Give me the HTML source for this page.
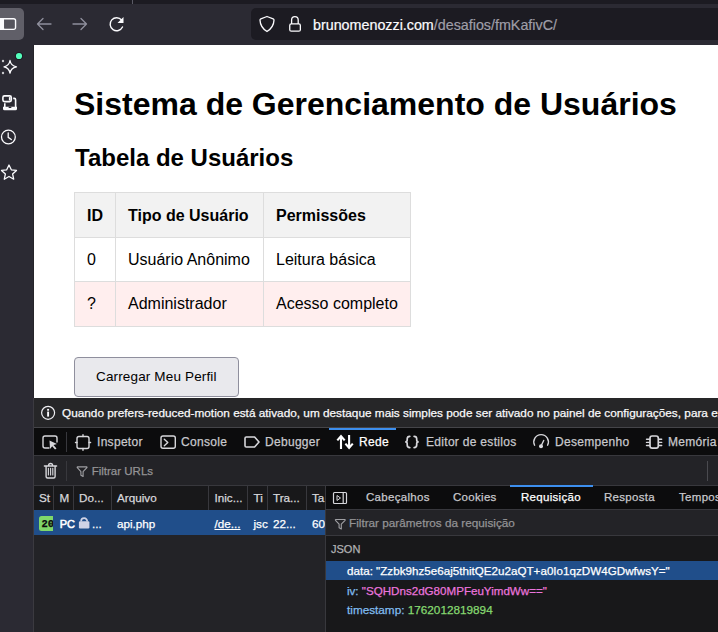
<!DOCTYPE html>
<html><head><meta charset="utf-8">
<style>
*{margin:0;padding:0;box-sizing:border-box}
html,body{width:718px;height:632px;overflow:hidden;background:#2b2a33;font-family:"Liberation Sans",sans-serif}
.a{position:absolute}
.t{position:absolute;white-space:nowrap;line-height:1}
svg{position:absolute;overflow:visible}
.dv .t{-webkit-text-stroke:0.25px currentColor}
</style></head><body>
<!-- top strip -->
<div class="a" style="left:0;top:0;width:718px;height:4px;background:#1c1b22"></div>
<div class="a" style="left:132px;top:0;width:1px;height:4px;background:#5b5b66"></div>
<!-- sidebar button -->
<div class="a" style="left:-8px;top:8px;width:32px;height:32px;border-radius:5px;background:#605f68"></div>
<svg style="left:0;top:0" width="34" height="200">
  <rect x="-4" y="18.75" width="19.5" height="10.5" rx="2" fill="#605f68" stroke="#fbfbfe" stroke-width="1.5"/>
  <rect x="-4" y="18" width="8" height="12" fill="#fbfbfe"/>
  <rect x="4.5" y="20" width="10" height="8.5" fill="#55545d"/>
  <!-- green dot -->
  <circle cx="19" cy="56" r="4" fill="#1c1b22"/>
  <circle cx="19" cy="56" r="3.1" fill="#54ffbd"/>
  <!-- sparkle -->
  <path d="M10 60.5 Q10.8 65.8 16.5 66.8 Q10.8 67.8 10 73.2 Q9.2 67.8 4 66.8 Q9.2 65.8 10 60.5 Z" fill="none" stroke="#fbfbfe" stroke-width="1.3" stroke-linejoin="round"/>
  <circle cx="3" cy="61" r="1.2" fill="#c8c8cc"/>
  <circle cx="3" cy="73" r="1.2" fill="#c8c8cc"/>
  <!-- synced tabs -->
  <rect x="2.9" y="95.9" width="8.4" height="5.7" rx="1.6" fill="none" stroke="#fbfbfe" stroke-width="1.6"/>
  <rect x="8.9" y="97.1" width="1.6" height="3.4" fill="#fbfbfe"/>
  <path d="M13.2 98.4 H14.3 Q15.6 98.4 15.6 99.7 V107" fill="none" stroke="#fbfbfe" stroke-width="1.6"/>
  <path d="M4.8 103.3 V107" fill="none" stroke="#fbfbfe" stroke-width="1.6"/>
  <path d="M3 106.8 H17 V108.8 Q17 110.3 15.5 110.3 H4.5 Q3 110.3 3 108.8 Z" fill="#fbfbfe"/>
  <rect x="8.6" y="106.8" width="2.8" height="1.1" rx="0.5" fill="#2b2a33"/>
  <!-- clock -->
  <circle cx="8.4" cy="137" r="6.9" fill="none" stroke="#fbfbfe" stroke-width="1.3"/>
  <path d="M8.2 133 V137.3 L11.3 139.6" fill="none" stroke="#fbfbfe" stroke-width="1.3" stroke-linecap="round"/>
  <!-- star -->
  <path d="M9 165 L11.3 169.8 L16.5 170.4 L12.6 173.9 L13.7 179.2 L9 176.5 L4.3 179.2 L5.4 173.9 L1.5 170.4 L6.7 169.8 Z" fill="none" stroke="#fbfbfe" stroke-width="1.3" stroke-linejoin="round"/>
</svg>
<!-- nav icons -->
<svg style="left:0;top:0" width="250" height="45">
  <path d="M51 24 H37.5 M43 18.5 L37.5 24 L43 29.5" fill="none" stroke="#8f8f9d" stroke-width="1.3" stroke-linecap="round" stroke-linejoin="round"/>
  <path d="M73 24 H86.5 M81 18.5 L86.5 24 L81 29.5" fill="none" stroke="#8f8f9d" stroke-width="1.3" stroke-linecap="round" stroke-linejoin="round"/>
  <path d="M121.6 20 A6.5 6.5 0 1 0 122.5 27" fill="none" stroke="#fbfbfe" stroke-width="1.4" stroke-linecap="round"/>
  <path d="M123.5 17 V23 H117.5 Z" fill="#fbfbfe"/>
</svg>
<!-- url bar -->
<div class="a" style="left:251px;top:8px;width:480px;height:32px;border-radius:5px;background:#1c1b22"></div>
<svg style="left:0;top:0" width="320" height="45">
  <path d="M267 16.5 L273.2 18.9 Q274 19.2 274 20.1 Q273.7 27.3 267 31.5 Q260.3 27.3 260 20.1 Q260 19.2 260.8 18.9 Z" fill="none" stroke="#fbfbfe" stroke-width="1.3" stroke-linejoin="round"/>
  <rect x="289.75" y="23.9" width="10.6" height="7.3" rx="1.5" fill="none" stroke="#fbfbfe" stroke-width="1.3"/>
  <path d="M291.6 23.9 V19.9 A3.3 3.3 0 0 1 298.2 19.9 V23.9" fill="none" stroke="#fbfbfe" stroke-width="1.3"/>
</svg>
<div class="t" style="left:313px;top:17.5px;font-size:14.3px;color:#fbfbfe;-webkit-text-stroke:0.2px currentColor">brunomenozzi.com<span style="color:#9f9ea8">/desafios/fmKafivC/</span></div>

<!-- content -->
<div class="a" style="left:34px;top:45px;width:684px;height:353px;background:#fff;overflow:hidden">
  <div class="t" style="left:40px;top:41px;font-size:32px;font-weight:bold;color:#000;line-height:37px">Sistema de Gerenciamento de Usuários</div>
  <div class="t" style="left:41px;top:99px;font-size:24px;font-weight:bold;color:#000;line-height:28px">Tabela de Usuários</div>
</div>
<!-- table -->
<div class="a" style="left:74px;top:192px;width:337px;height:135px;border:1px solid #dddddd;background:#fff"></div>
<div class="a" style="left:75px;top:193px;width:335px;height:44px;background:#f2f2f2"></div>
<div class="a" style="left:75px;top:282px;width:335px;height:44px;background:#ffeeee"></div>
<div class="a" style="left:74px;top:237px;width:337px;height:1px;background:#dddddd"></div>
<div class="a" style="left:74px;top:281px;width:337px;height:1px;background:#dddddd"></div>
<div class="a" style="left:115px;top:192px;width:1px;height:135px;background:#dddddd"></div>
<div class="a" style="left:263px;top:192px;width:1px;height:135px;background:#dddddd"></div>
<div class="t" style="left:87px;top:208px;font-size:16px;font-weight:bold;color:#000">ID</div>
<div class="t" style="left:128px;top:208px;font-size:16px;font-weight:bold;color:#000">Tipo de Usuário</div>
<div class="t" style="left:276px;top:208px;font-size:16px;font-weight:bold;color:#000">Permissões</div>
<div class="t" style="left:87px;top:252px;font-size:16px;color:#000">0</div>
<div class="t" style="left:128px;top:252px;font-size:16px;color:#000">Usuário Anônimo</div>
<div class="t" style="left:276px;top:252px;font-size:16px;color:#000">Leitura básica</div>
<div class="t" style="left:87px;top:296px;font-size:16px;color:#000">?</div>
<div class="t" style="left:128px;top:296px;font-size:16px;color:#000">Administrador</div>
<div class="t" style="left:276px;top:296px;font-size:16px;color:#000">Acesso completo</div>
<!-- button -->
<div class="a" style="left:74px;top:357px;width:165px;height:40px;border:1px solid #8f8f9d;border-radius:4px;background:#e9e9ed"></div>
<div class="t" style="left:96px;top:370px;font-size:13.5px;letter-spacing:0.15px;color:#000">Carregar Meu Perfil</div>

<div class="a" style="left:33px;top:45px;width:1px;height:353px;background:#252429"></div>
<div class="a" style="left:33px;top:398px;width:1px;height:234px;background:#3b3a40"></div>
<!-- devtools -->
<div class="dv">
<div class="a" style="left:34px;top:398px;width:684px;height:234px;background:#232327"></div>
<!-- notification -->
<div class="a" style="left:34px;top:398px;width:684px;height:29px;background:#262628"></div>
<svg style="left:0;top:0" width="718" height="632">
  <circle cx="48.1" cy="412.8" r="6.5" fill="none" stroke="#f0f0f4" stroke-width="1.2"/>
  <rect x="47.15" y="411.6" width="1.9" height="5" fill="#fbfbfe"/>
  <rect x="47.15" y="408.9" width="1.9" height="1.8" fill="#fbfbfe"/>
</svg>
<div class="t" style="left:62px;top:407.5px;font-size:11.8px;color:#f9f9fa">Quando prefers-reduced-motion está ativado, um destaque mais simples pode ser ativado no painel de configurações, para exibir</div>
<!-- tab toolbar -->
<div class="a" style="left:34px;top:427px;width:684px;height:28px;background:#0c0c0d"></div>
<div class="a" style="left:34px;top:427px;width:684px;height:1px;background:#454549"></div>
<div class="a" style="left:34px;top:455px;width:684px;height:1px;background:#38383d"></div>
<div class="a" style="left:329px;top:428px;width:67px;height:2px;background:#3d8fef"></div>
<div class="a" style="left:66px;top:432px;width:1px;height:20px;background:#38383d"></div>
<svg style="left:0;top:0" width="718" height="632">
  <g fill="none" stroke="#d7d7db" stroke-width="1.4" stroke-linejoin="round" stroke-linecap="round">
    <path d="M49 448 H45 Q43 448 43 446 V438 Q43 436 45 436 H55 Q57 436 57 438 V442"/>
    <rect x="77" y="436.5" width="12" height="12" rx="2"/>
    <path d="M83 434.7 V436.5 M83 448.5 V450.2 M75.5 442.5 H77 M89 442.5 H90.6"/>
    <rect x="161" y="436" width="14.3" height="12.3" rx="2"/>
    <path d="M164.3 439.3 L167.8 442.5 L164.3 445.8"/>
    <path d="M246.3 437 H254.6 L259 442 L254.6 447 H246.3 Q245 447 245 445.7 V438.3 Q245 437 246.3 437 Z" stroke-width="1.6"/>
    <path d="M534.6 445.2 A7.3 7.3 0 1 1 547.6 445.2"/>
    <path d="M541.3 445.5 L543.7 440.5"/>
    <rect x="650" y="436" width="8.3" height="12.1" rx="2.2" stroke-width="1.7"/>
    <path d="M646.5 439.3 H649.5 M646.5 442.4 H649.5 M646.5 445.5 H649.5 M658.8 439.3 H661.7 M658.8 442.4 H661.7 M658.8 445.5 H661.7"/>
  </g>
  <path d="M49.5 440.5 L57 444 L53.5 445 L56.5 448.5 L55 449.6 L52.2 446.2 L50 449 Z" fill="#d7d7db"/>
  <circle cx="541" cy="446.3" r="2" fill="#d7d7db"/>
  <g fill="none" stroke="#fff" stroke-width="2.1" stroke-linecap="butt" stroke-linejoin="miter">
    <path d="M341 449 V436.5 M337.3 440.4 L341 436.2 L344.7 440.4"/>
    <path d="M349.1 435 V447.5 M345.4 443.6 L349.1 447.8 L352.8 443.6"/>
  </g>
  <g fill="none" stroke="#d7d7db" stroke-width="1.7" stroke-linecap="round">
    <path d="M409.8 436.3 Q407.2 436.3 407.2 438.8 V440 Q407.2 441.8 405.2 441.8 Q407.2 441.8 407.2 443.6 V445 Q407.2 447.6 409.8 447.6"/>
    <path d="M414.1 436.3 Q416.7 436.3 416.7 438.8 V440 Q416.7 441.8 418.7 441.8 Q416.7 441.8 416.7 443.6 V445 Q416.7 447.6 414.1 447.6"/>
  </g>
</svg>
<div class="t" style="left:97px;top:436px;font-size:12px;letter-spacing:0.3px;color:#c8c8cc">Inspetor</div>
<div class="t" style="left:181px;top:436px;font-size:12px;letter-spacing:0.3px;color:#c8c8cc">Console</div>
<div class="t" style="left:265px;top:436px;font-size:12px;letter-spacing:0.3px;color:#c8c8cc">Debugger</div>
<div class="t" style="left:359px;top:436px;font-size:12px;letter-spacing:0.3px;color:#fff">Rede</div>
<div class="t" style="left:426px;top:436px;font-size:12px;letter-spacing:0.3px;color:#c8c8cc">Editor de estilos</div>
<div class="t" style="left:555px;top:436px;font-size:12px;letter-spacing:0.3px;color:#c8c8cc">Desempenho</div>
<div class="t" style="left:668px;top:436px;font-size:12px;letter-spacing:0.3px;color:#c8c8cc">Memória</div>

<!-- filter bar -->
<div class="a" style="left:34px;top:456px;width:684px;height:29px;background:#232327"></div>
<div class="a" style="left:34px;top:485px;width:684px;height:1px;background:#38383d"></div>
<div class="a" style="left:66px;top:461px;width:1px;height:20px;background:#38383d"></div>
<div class="a" style="left:707px;top:461px;width:1px;height:20px;background:#4a4a4f"></div>
<svg style="left:0;top:0" width="718" height="632">
  <g fill="none" stroke="#d7d7db" stroke-width="1.4" stroke-linecap="round" stroke-linejoin="round">
    <path d="M44.4 466 H56.6 M48.6 465.6 Q48.6 463.5 50.6 463.5 Q52.6 463.5 52.6 465.6"/>
    <path d="M46.1 466.5 V476.5 Q46.1 478 47.6 478 H53.6 Q55.1 478 55.1 476.5 V466.5"/>
    <path d="M48.4 468.3 V475 M50.6 468.3 V475 M52.8 468.3 V475" stroke-width="1.1"/>
  </g>
  <path id="flt" d="M77.6 466.9 H86.6 Q87.3 467 86.9 467.7 L83.1 471.6 V476.4 L80.9 475.2 V471.6 L77.3 467.7 Q76.9 467 77.6 466.9 Z" fill="none" stroke="#a0a0a4" stroke-width="1.1" stroke-linejoin="round"/>
</svg>
<div class="t" style="left:91.7px;top:465.5px;font-size:11.5px;color:#939395">Filtrar URLs</div>

<!-- list header -->
<div class="a" style="left:34px;top:486px;width:291px;height:24px;background:#18181a"></div>
<div class="a" style="left:53px;top:486px;width:1px;height:24px;background:#38383d"></div>
<div class="a" style="left:73px;top:486px;width:1px;height:24px;background:#38383d"></div>
<div class="a" style="left:111px;top:486px;width:1px;height:24px;background:#38383d"></div>
<div class="a" style="left:208px;top:486px;width:1px;height:24px;background:#38383d"></div>
<div class="a" style="left:247px;top:486px;width:1px;height:24px;background:#38383d"></div>
<div class="a" style="left:267px;top:486px;width:1px;height:24px;background:#38383d"></div>
<div class="a" style="left:306px;top:486px;width:1px;height:24px;background:#38383d"></div>
<div style="position:absolute;left:34px;top:486px;width:291px;height:24px;overflow:hidden">
  <div class="t" style="left:5px;top:6px;font-size:11.7px;color:#d7d7db">St</div>
  <div class="t" style="left:25.5px;top:6px;font-size:11.7px;color:#d7d7db">M</div>
  <div class="t" style="left:45px;top:6px;font-size:11.7px;color:#d7d7db">Do...</div>
  <div class="t" style="left:83px;top:6px;font-size:11.7px;color:#d7d7db">Arquivo</div>
  <div class="t" style="left:180.5px;top:6px;font-size:11.7px;color:#d7d7db">Inic...</div>
  <div class="t" style="left:219.5px;top:6px;font-size:11.7px;color:#d7d7db">Ti</div>
  <div class="t" style="left:239px;top:6px;font-size:11.7px;color:#d7d7db">Tra...</div>
  <div class="t" style="left:278px;top:6px;font-size:11.7px;color:#d7d7db">Ta</div>
</div>
<!-- selected row -->
<div style="position:absolute;left:34px;top:510px;width:291px;height:25px;background:#204e8a;overflow:hidden">
  <div class="a" style="left:5px;top:6px;width:14px;height:14.5px;border-radius:2.5px 0 0 2.5px;background:#7fd86a;overflow:hidden"><div class="t" style="left:2.5px;top:3px;font-family:'Liberation Mono',monospace;font-size:10.5px;font-weight:bold;color:#0c0c0d">200</div></div>
  <div class="t" style="left:25.7px;top:8.5px;font-size:11px;color:#fff;-webkit-text-stroke:0.55px #fff">PC</div>
  <svg style="left:0;top:0" width="80" height="25">
    <rect x="44.9" y="11.2" width="10.5" height="7.3" rx="1.2" fill="#d0d3e6"/>
    <path d="M47.1 11.6 V11.2 A3.05 3.05 0 0 1 53.2 11.2 V11.6" fill="none" stroke="#d0d3e6" stroke-width="1.7"/>
  </svg>
  <div class="t" style="left:58px;top:7.5px;font-size:11.7px;color:#fff">...</div>
  <div class="t" style="left:83px;top:7.5px;font-size:11.7px;color:#fff">api.php</div>
  <div class="t" style="left:180.5px;top:7.5px;font-size:11.7px;color:#fff;text-decoration:underline">/de...</div>
  <div class="t" style="left:219.5px;top:7.5px;font-size:11.7px;color:#fff">jsc</div>
  <div class="t" style="left:239px;top:7.5px;font-size:11.7px;color:#fff">22...</div>
  <div class="t" style="left:278px;top:7.5px;font-size:11.7px;color:#fff">60</div>
</div>
<!-- splitter -->
<div class="a" style="left:325px;top:486px;width:1px;height:146px;background:#38383d"></div>
<!-- sidebar -->
<div class="a" style="left:326px;top:486px;width:392px;height:146px;background:#18181a"></div>
<div class="a" style="left:326px;top:486px;width:392px;height:23px;background:#0c0c0d"></div>
<div class="a" style="left:510px;top:485px;width:83px;height:2px;background:#3d8fef"></div>
<div class="a" style="left:326px;top:509px;width:392px;height:1px;background:#38383d"></div>
<svg style="left:0;top:0" width="718" height="632">
  <rect x="333.5" y="492.5" width="13" height="11" rx="1" fill="none" stroke="#d7d7db" stroke-width="1.2"/>
  <path d="M343.2 492.5 V503.5" stroke="#d7d7db" stroke-width="1.2"/>
  <path d="M337 495.5 L340.5 498 L337 500.5 Z" fill="none" stroke="#d7d7db" stroke-width="1"/>
</svg>
<div class="t" style="left:366px;top:492px;font-size:11.5px;letter-spacing:0.3px;color:#c8c8cc">Cabeçalhos</div>
<div class="t" style="left:453px;top:492px;font-size:11.5px;letter-spacing:0.3px;color:#c8c8cc">Cookies</div>
<div class="t" style="left:521px;top:492px;font-size:11.5px;letter-spacing:0.3px;color:#fff">Requisição</div>
<div class="t" style="left:604px;top:492px;font-size:11.5px;letter-spacing:0.3px;color:#c8c8cc">Resposta</div>
<div class="t" style="left:679px;top:492px;font-size:11.5px;letter-spacing:0.3px;color:#c8c8cc">Tempos</div>
<div class="a" style="left:326px;top:510px;width:392px;height:25px;background:#232327"></div>
<div class="a" style="left:326px;top:535px;width:392px;height:1px;background:#38383d"></div>
<svg style="left:0;top:0" width="718" height="632">
  <path transform="translate(258.2 52.6)" d="M77.6 466.9 H86.6 Q87.3 467 86.9 467.7 L83.1 471.6 V476.4 L80.9 475.2 V471.6 L77.3 467.7 Q76.9 467 77.6 466.9 Z" fill="none" stroke="#a0a0a4" stroke-width="1.1" stroke-linejoin="round"/>
</svg>
<div class="t" style="left:349px;top:517px;font-size:11.75px;color:#939395">Filtrar parâmetros da requisição</div>
<div class="t" style="left:331px;top:543.5px;font-size:11px;color:#b1b1b3">JSON</div>
<div class="a" style="left:326px;top:561px;width:392px;height:19px;background:#204e8a"></div>
<div class="t" style="left:347px;top:565px;font-size:11.65px;color:#fff">data: "Zzbk9hz5e6aj5thitQE2u2aQT+a0Io1qzDW4GDwfwsY="</div>
<div class="t" style="left:347px;top:585px;font-size:11.6px;color:#80bdf0">iv: <span style="color:#ea74dc">"SQHDns2dG80MPFeuYimdWw=="</span></div>
<div class="t" style="left:347px;top:604px;font-size:11.75px;color:#80bdf0">timestamp: <span style="color:#86d870">1762012819894</span></div>
</div>
</body></html>
